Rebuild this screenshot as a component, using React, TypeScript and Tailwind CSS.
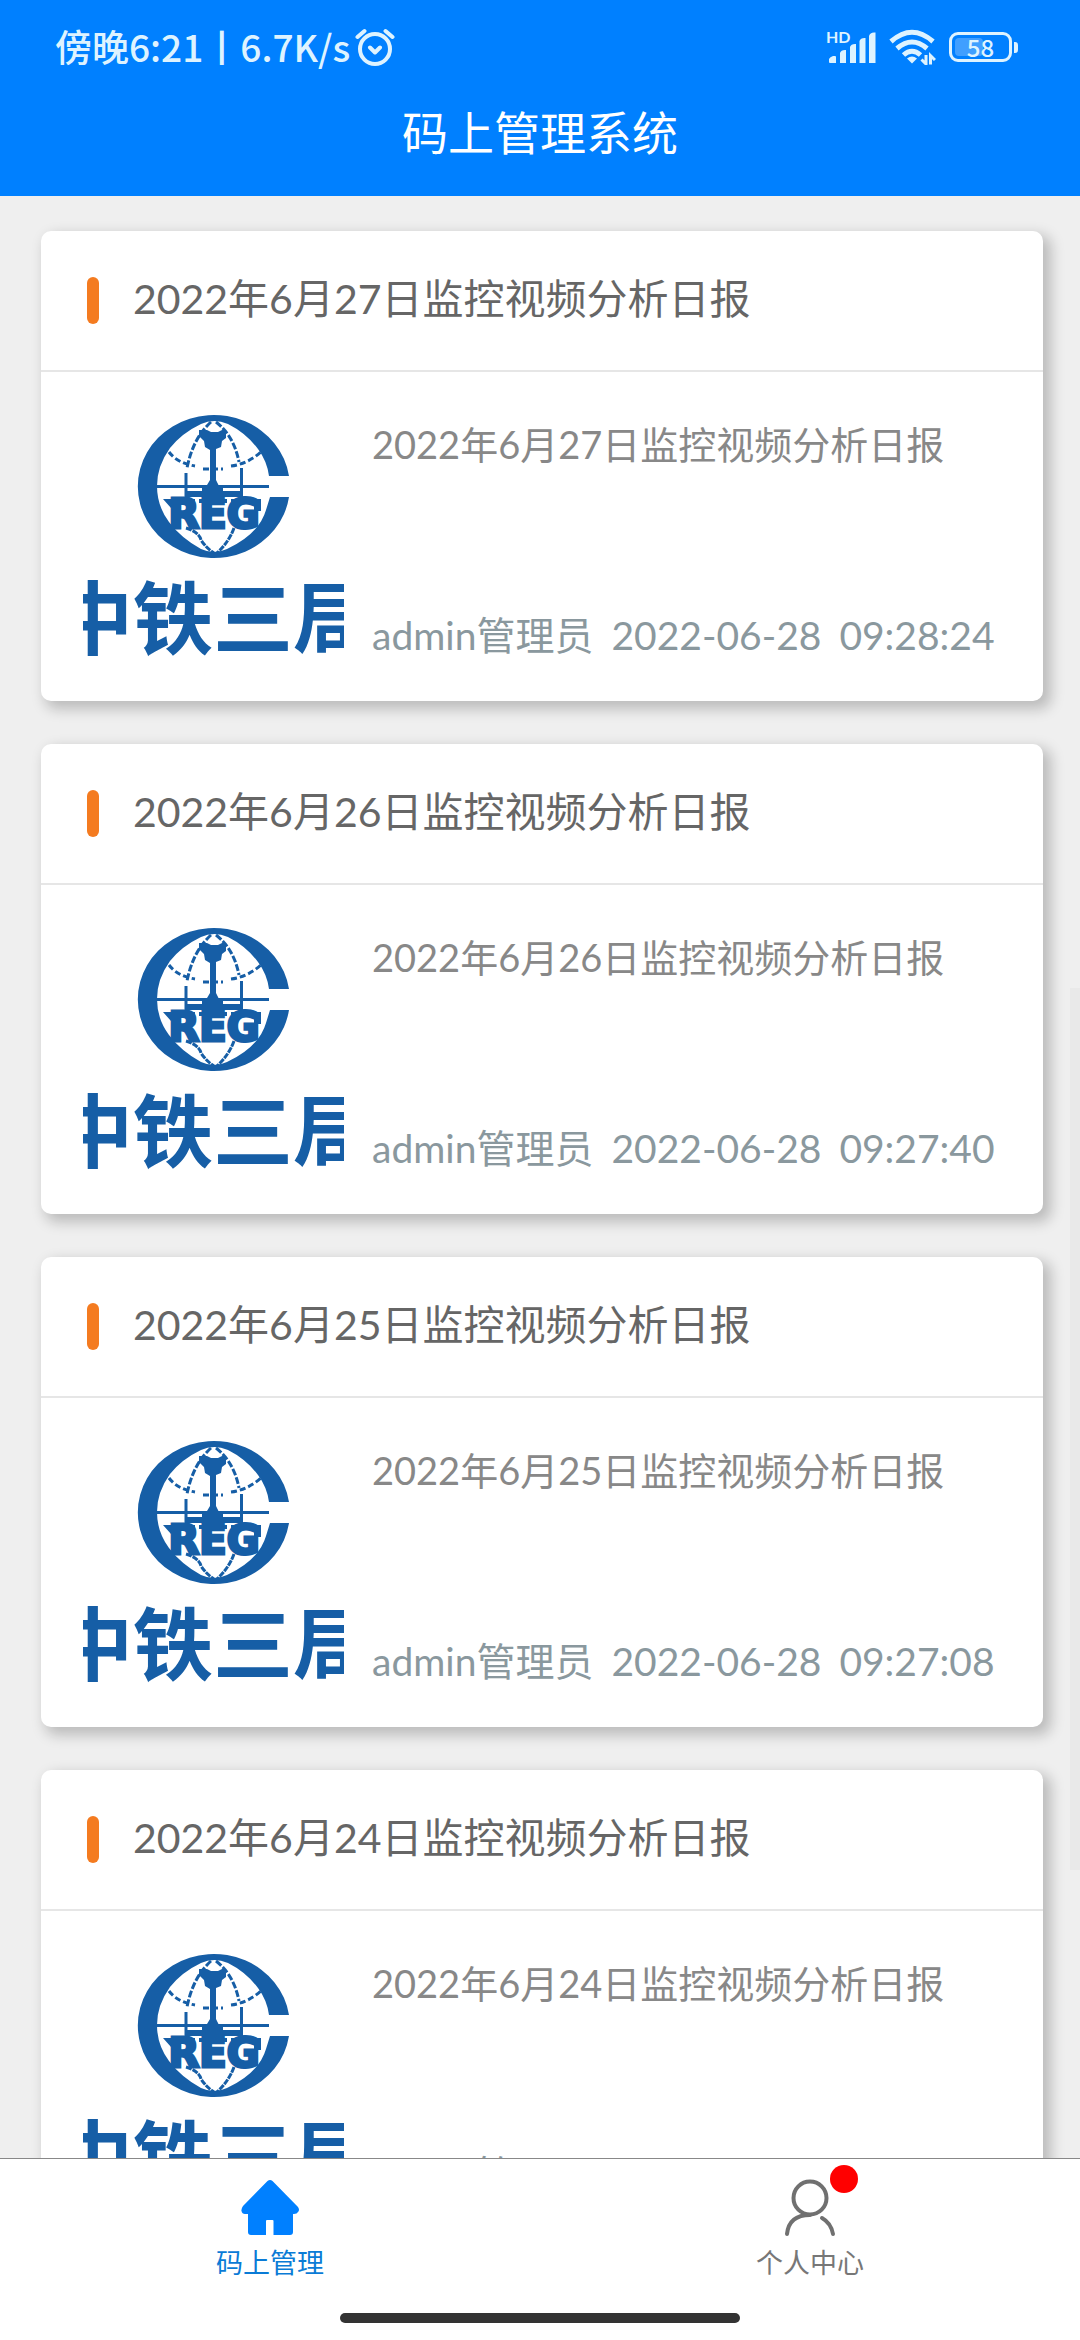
import React from "react";

type Report = { day: number; time: string };

const reports: Report[] = [
  { day: 27, time: "09:28:24" },
  { day: 26, time: "09:27:40" },
  { day: 25, time: "09:27:08" },
  { day: 24, time: "09:26:35" },
];

function AlarmIcon() {
  return (
    <svg width="40" height="40" viewBox="0 0 40 40" fill="none" stroke="#def3ff" strokeWidth="4" strokeLinecap="round" strokeLinejoin="round" aria-hidden="true">
      <circle cx="20" cy="22" r="15" />
      <path d="M2.500 10 9.500 4M37.500 10 30.500 4M15 20.500 20 25.500 25 20.500" />
    </svg>
  );
}

function SignalIcon() {
  return (
    <svg className="overflow-visible" width="50" height="34" viewBox="0 0 50 34" fill="#def3ff" role="img" aria-label="HD">
      <text x="0" y="13" fontSize="16" fontWeight="700" fontFamily="Lato, sans-serif">HD</text>
      <path d="M3 29Q4 27 7 26H9Q10 26 10 27V33H4Q3 33 3 32ZM14 23Q15 20 19 20H20V33H14ZM24 17Q25 14 29 14H30V33H24ZM33.500 11Q34.500 8 38.500 8H39.500V33H33.500ZM43 6Q44 2.500 48 2.500H49.500V33H43Z" />
    </svg>
  );
}

function WifiIcon() {
  return (
    <svg width="47" height="36" viewBox="0 0 47 36" fill="none" stroke="#def3ff" aria-hidden="true">
      <path d="M2 12.500Q23 -6 44 12.500M8 19.500Q23 6.500 38 19.500M14.500 26Q23 18.500 31.500 26" strokeWidth="5" />
      <path d="M18 29.500Q23 25.500 28 29.500L23 34.500Z" fill="#def3ff" stroke="none" />
      <path d="M37 26V35L32.500 30.500M41.500 35.500V26.500L46 31" strokeWidth="3" />
    </svg>
  );
}

function Battery() {
  return (
    <div className="flex items-center gap-[2px]">
      <div className="relative flex h-[30px] w-[63px] items-center justify-center rounded-[9px] border-3 border-[#def3ff] font-['Noto_Sans_CJK_SC',sans-serif] text-2xl leading-6 font-medium text-[#def3ff]">
        <span className="absolute inset-y-[3px] left-[3px] w-7 rounded-[4px] bg-[#409fff]" />
        <span className="relative">58</span>
      </div>
      <span className="h-[11px] w-1 rounded-r-[3px] bg-[#def3ff]" />
    </div>
  );
}

function CompanyLogo() {
  return (
    <svg className="h-[261px] w-[261px] shrink-0 overflow-hidden" viewBox="0 0 261 261" fill="none" stroke="#165ea6" role="img" aria-label="中铁三局">
      <path
        fill="#165ea6"
        stroke="none"
        d="M206 70H186Q184 55 175 43Q163 27 145 18Q131 12 118 18Q99 27 87 42Q74 60 74 80Q74 100 86 116Q98 132 118 143Q131 149 144 143Q176 128 183 104L187 91H206A76 71.500 0 1 1 206 70Z"
      />
      <path d="M73 80.500H186" strokeWidth="3" />
      <path d="M103 67V96M158.500 62V96" strokeWidth="3" />
      <path d="M128 16Q110 32 104 62M133 16Q151 30 156 56" strokeWidth="3" strokeDasharray="7 2" />
      <path d="M103 122Q116 126 118 134Q123 142 131 147M151 122Q146 136 134 147" strokeWidth="3" strokeDasharray="6 1" />
      <path d="M86 46Q94 57 112 60M120 63H140M148 60Q165 58 179 45" strokeWidth="3" strokeDasharray="6 3" />
      <path
        fill="#165ea6"
        stroke="none"
        d="M116 24H124L128 26H135L139 24H143V32L139 35L138 41L133 43V74L136 80L140 82V85H158V91H103V85H119V81L124 79L127 74V44L122 41L121 35L116 30Z"
      />
      <path fill="#165ea6" stroke="none" d="M80 93H112V98H92L88 102ZM116 93H144V97H116ZM148 93H178V105H171V97H148Z" />
      <g fill="#165ea6" stroke="none">
        <text x="131" y="122" textAnchor="middle" fontSize="40" fontWeight="700" fontFamily="'DejaVu Sans', sans-serif" stroke="#165ea6" strokeWidth="3">
          REG
        </text>
        <text x="130" y="242" textAnchor="middle" fontSize="80" fontWeight="700" fontFamily="'Noto Sans CJK SC', sans-serif">
          中铁三局
        </text>
      </g>
    </svg>
  );
}

function ReportCard({ day, time }: Report) {
  const title = `2022年6月${day}日监控视频分析日报`;
  return (
    <article className="shrink-0 rounded-[10px] bg-white shadow-[6px_6px_14px_2px_rgba(0,0,0,0.22)]">
      <header className="flex h-[141px] items-center gap-[34px] border-b-2 border-[#e6e6e6] px-[46px]">
        <span className="h-[47px] w-3 shrink-0 rounded-full bg-[#f47b20]" />
        <h2 className="whitespace-nowrap pb-1 text-[41px] leading-[60px] text-[#666666]">{title}</h2>
      </header>
      <div className="flex gap-7 px-[42px] py-[34px]">
        <CompanyLogo />
        <div className="flex min-w-0 flex-1 flex-col justify-between pt-[10px] pb-1">
          <p className="whitespace-nowrap text-[38px] leading-[56px] text-[#888888]">{title}</p>
          <p className="flex gap-[18px] whitespace-nowrap text-[39px] leading-[56px] text-[#8a989e]">
            <span>admin管理员</span>
            <span>2022-06-28</span>
            <span>{time}</span>
          </p>
        </div>
      </div>
    </article>
  );
}

function HomeIcon() {
  return (
    <svg width="60" height="58" viewBox="0 0 60 58" fill="#0080ff" aria-hidden="true">
      <path d="M27.500 2Q30 0 32.500 2L58 28Q60 31 58 33Q57 35 54 35H53V53Q53 56 50 56H33.500V42Q33.500 41 32.500 41H27Q26 41 26 42V56H11Q8 56 8 53V35H5Q2 35 1.500 32Q1 30 3 27Z" />
    </svg>
  );
}

function PersonIcon() {
  return (
    <svg width="60" height="58" viewBox="0 0 60 58" fill="none" stroke="#707070" strokeWidth="4" strokeLinecap="round" aria-hidden="true">
      <circle cx="30" cy="19" r="16.500" />
      <path d="M7 55Q9 36 30 36M42 39Q51 44 53 55" />
    </svg>
  );
}

export default function App() {
  return (
    <div className="flex h-screen flex-col overflow-hidden bg-[#efefef] font-[Lato,'Noto_Sans_CJK_SC',sans-serif]">
      <header className="shrink-0 bg-[#0080ff] pb-6">
        <div className="flex h-[94px] items-center justify-between pr-[62px] pl-[55px]">
          <div className="flex items-center gap-[5px] font-['Noto_Sans_CJK_SC',sans-serif] text-[37px] leading-[56px] font-medium text-[#def3ff]">
            <span className="whitespace-nowrap pb-[2px]">傍晚6:21丨6.7K/s</span>
            <AlarmIcon />
          </div>
          <div className="flex items-center gap-[13px]">
            <SignalIcon />
            <WifiIcon />
            <Battery />
          </div>
        </div>
        <h1 className="text-center text-[46px] leading-[78px] text-white">码上管理系统</h1>
      </header>

      <main className="relative min-h-0 flex-1">
        <div className="flex h-full flex-col gap-[43px] overflow-y-auto pt-[35px] pr-[37px] pl-[41px] [scrollbar-width:none]">
          {reports.map((r) => (
            <ReportCard key={r.day} day={r.day} time={r.time} />
          ))}
        </div>
        <span className="absolute top-[792px] right-0 h-[882px] w-[10px] bg-[#e9e9e9]" />
      </main>

      <nav className="shrink-0 border-t border-[#888888] bg-white pb-[17px]">
        <div className="flex h-[154px] pt-5">
          <button type="button" className="flex flex-1 flex-col items-center gap-[6px] text-[27px] leading-[40px] text-[#0a7bd6]">
            <HomeIcon />
            <span>码上管理</span>
          </button>
          <button type="button" className="flex flex-1 flex-col items-center gap-[6px] text-[27px] leading-[40px] text-[#777777]">
            <span className="relative">
              <PersonIcon />
              <span className="absolute -top-[14px] -right-[18px] h-7 w-7 rounded-full bg-[#ff0000]" />
            </span>
            <span>个人中心</span>
          </button>
        </div>
        <div className="mx-auto h-[10px] w-[37%] rounded-full bg-[#333333]" />
      </nav>
    </div>
  );
}
